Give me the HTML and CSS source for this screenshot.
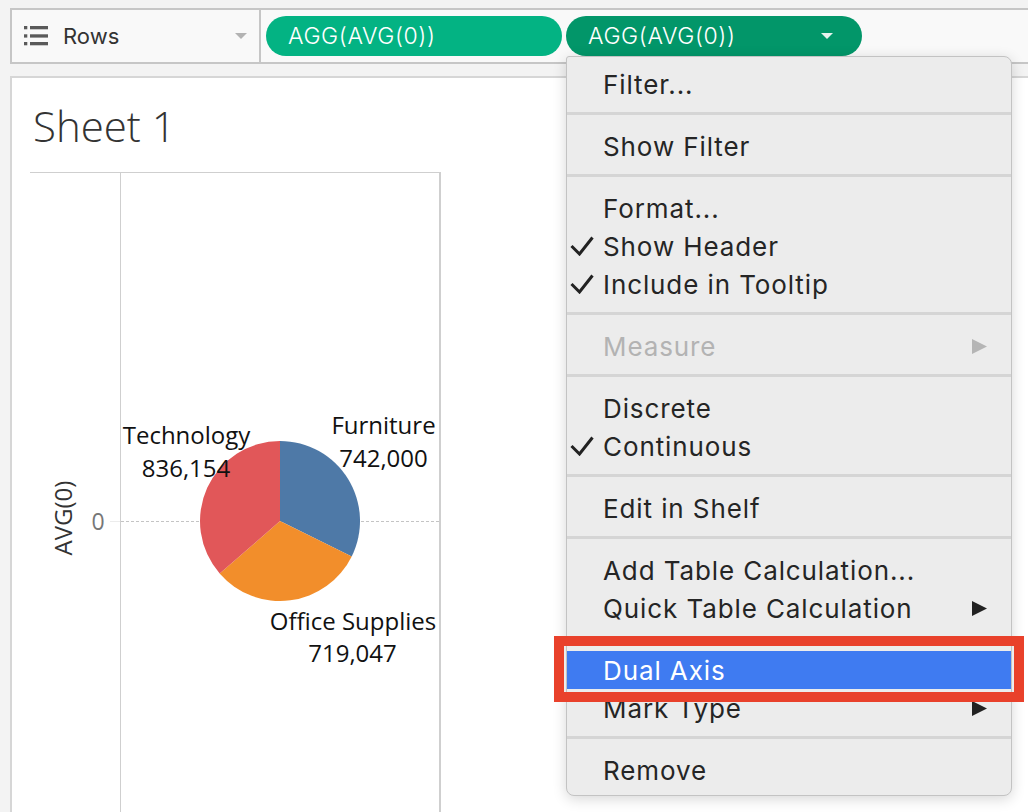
FILE: index.html
```html
<!DOCTYPE html>
<html>
<head>
<meta charset="utf-8">
<link rel="stylesheet" href="styles.css">
</head>
<body>
<div class="app">
  <div class="shelf">
    <div class="shelf-label">
      <svg class="rows-icon" width="24" height="20" viewBox="0 0 24 20">
        <rect x="0" y="0" width="3.3" height="3.3" fill="#5a5a5a"/>
        <rect x="6" y="0" width="18" height="3.3" fill="#5a5a5a"/>
        <rect x="0" y="8.3" width="3.3" height="3.3" fill="#5a5a5a"/>
        <rect x="6" y="8.3" width="18" height="3.3" fill="#5a5a5a"/>
        <rect x="0" y="16" width="3.3" height="3.3" fill="#5a5a5a"/>
        <rect x="6" y="16" width="18" height="3.3" fill="#5a5a5a"/>
      </svg>
      <span class="rows-text">Rows</span>
      <svg class="caret" width="12" height="6" viewBox="0 0 12 6"><polygon points="0,0 12,0 6,6" fill="#b3b3b3"/></svg>
    </div>
    <div class="shelf-pills">
      <div class="pill pill-a">AGG(AVG(0))</div>
      <div class="pill pill-b">
        <span>AGG(AVG(0))</span>
        <svg class="pill-caret" width="12" height="6" viewBox="0 0 12 6"><polygon points="0,0 12,0 6,6" fill="#e6f3ee"/></svg>
      </div>
    </div>
  </div>

  <div class="sheet">
    <h1 class="sheet-title">Sheet 1</h1>
    <div class="chart">
      <div class="axis">
        <svg width="90" height="639" viewBox="0 0 90 639">
          <line x1="80" y1="348.5" x2="90" y2="348.5" stroke="#ececec" stroke-width="1"/>
          <text class="axis-title" x="32" y="345" font-size="24" transform="rotate(-90 32 345)" text-anchor="middle" dominant-baseline="central">AVG(0)</text>
          <text class="tick" x="68" y="357" font-size="23" text-anchor="middle">0</text>
        </svg>
      </div>
      <div class="pane">
        <svg width="318" height="639" viewBox="0 0 318 639">
          <line x1="0" y1="348.5" x2="318" y2="348.5" stroke="#c4c4c4" stroke-width="1" stroke-dasharray="3 2"/>
          <path d="M159 348 L159 268 A80 80 0 0 1 230.73 383.42 Z" fill="#4e79a7"/>
          <path d="M159 348 L230.73 383.42 A80 80 0 0 1 98.66 400.52 Z" fill="#f28e2b"/>
          <path d="M159 348 L98.66 400.52 A80 80 0 0 1 159 268 Z" fill="#e15759"/>
          <text class="lbl" x="65.5" y="271" text-anchor="middle">Technology</text>
          <text class="lbl" x="65" y="304" text-anchor="middle">836,154</text>
          <text class="lbl" x="262.5" y="261" text-anchor="middle">Furniture</text>
          <text class="lbl" x="262.5" y="294" text-anchor="middle">742,000</text>
          <text class="lbl" x="232" y="457" text-anchor="middle">Office Supplies</text>
          <text class="lbl" x="231.5" y="489" text-anchor="middle">719,047</text>
        </svg>
      </div>
    </div>
  </div>

  <div class="menu">
    <div class="item"><span class="mark"></span><span class="label">Filter...</span></div>
    <div class="sep"></div>
    <div class="item"><span class="mark"></span><span class="label">Show Filter</span></div>
    <div class="sep"></div>
    <div class="item"><span class="mark"></span><span class="label">Format...</span></div>
    <div class="item"><span class="mark"><svg width="24" height="20" viewBox="0 0 24 20"><polyline points="1.5,10 9.5,18 22.5,1.5" fill="none" stroke="#222" stroke-width="3" stroke-linejoin="miter"/></svg></span><span class="label">Show Header</span></div>
    <div class="item"><span class="mark"><svg width="24" height="20" viewBox="0 0 24 20"><polyline points="1.5,10 9.5,18 22.5,1.5" fill="none" stroke="#222" stroke-width="3" stroke-linejoin="miter"/></svg></span><span class="label">Include in Tooltip</span></div>
    <div class="sep"></div>
    <div class="item disabled"><span class="mark"></span><span class="label">Measure</span><svg class="arrow" width="15" height="15" viewBox="0 0 15 15"><polygon points="0,0 15,7.5 0,15" fill="#b5b5b5"/></svg></div>
    <div class="sep"></div>
    <div class="item"><span class="mark"></span><span class="label">Discrete</span></div>
    <div class="item"><span class="mark"><svg width="24" height="20" viewBox="0 0 24 20"><polyline points="1.5,10 9.5,18 22.5,1.5" fill="none" stroke="#222" stroke-width="3" stroke-linejoin="miter"/></svg></span><span class="label">Continuous</span></div>
    <div class="sep"></div>
    <div class="item"><span class="mark"></span><span class="label">Edit in Shelf</span></div>
    <div class="sep"></div>
    <div class="item"><span class="mark"></span><span class="label">Add Table Calculation...</span></div>
    <div class="item"><span class="mark"></span><span class="label">Quick Table Calculation</span><svg class="arrow" width="15" height="15" viewBox="0 0 15 15"><polygon points="0,0 15,7.5 0,15" fill="#222"/></svg></div>
    <div class="sep"></div>
    <div class="item active"><span class="mark"></span><span class="label">Dual Axis</span></div>
    <div class="item"><span class="mark"></span><span class="label">Mark Type</span><svg class="arrow" width="15" height="15" viewBox="0 0 15 15"><polygon points="0,0 15,7.5 0,15" fill="#222"/></svg></div>
    <div class="sep"></div>
    <div class="item"><span class="mark"></span><span class="label">Remove</span></div>
  </div>

  <div class="callout"></div>
</div>
</body>
</html>
```

FILE: styles.css
```css
html, body {
  margin: 0;
  padding: 0;
}
body {
  background: #f3f3f3;
  width: 1028px;
  height: 812px;
  overflow: hidden;
  font-family: "Inter", "Liberation Sans", sans-serif;
}
.app {
  position: relative;
  width: 1028px;
  height: 812px;
  box-sizing: border-box;
  padding-top: 8px;
}

/* Shelf */
.shelf {
  margin: 0 0 0 10px;
  height: 56px;
  box-sizing: border-box;
  border-top: 2px solid #c6c6c6;
  border-bottom: 2px solid #c6c6c6;
  border-left: 2px solid #c6c6c6;
  display: flex;
}
.shelf-label {
  width: 249px;
  box-sizing: border-box;
  background: #f9f9f9;
  border-right: 2px solid #c6c6c6;
  display: flex;
  align-items: center;
  padding-left: 12px;
  padding-right: 12px;
}
.rows-icon {
  flex: none;
  display: block;
}
.rows-text {
  margin-left: 15px;
  font-size: 22px;
  color: #333;
}
.caret {
  margin-left: auto;
  display: block;
}
.shelf-pills {
  flex: 1;
  background: #f9f9f9;
  display: flex;
  align-items: center;
  gap: 4px;
  padding-left: 5px;
}
.pill {
  height: 40px;
  width: 296px;
  box-sizing: border-box;
  border-radius: 20px;
  color: #fff;
  font-size: 23px;
  letter-spacing: 0.6px;
  font-weight: 300;
  display: flex;
  align-items: center;
  padding-left: 22px;
}
.pill-a {
  background: #03b383;
}
.pill-b {
  background: #029669;
  justify-content: space-between;
  padding-right: 29px;
}
.pill-caret {
  display: block;
}

/* Sheet */
.sheet {
  margin: 12px 0 0 10px;
  height: 736px;
  box-sizing: border-box;
  background: #fff;
  border-top: 2px solid #d6d6d6;
  border-left: 2px solid #d6d6d6;
}
.sheet-title {
  margin: 0;
  height: 94px;
  box-sizing: border-box;
  padding: 20px 0 0 21px;
  font-family: "Open Sans", sans-serif;
  font-weight: 300;
  font-size: 42px;
  line-height: 56px;
  color: #333;
}
.chart {
  margin-left: 18px;
  width: 411px;
  height: 640px;
  box-sizing: border-box;
  border-top: 1px solid #cfcfcf;
  border-right: 2px solid #cfcfcf;
  display: flex;
}
.axis {
  width: 91px;
  box-sizing: border-box;
  border-right: 1px solid #cfcfcf;
}
.axis svg, .pane svg {
  display: block;
}
.pane {
  width: 318px;
}
.axis-title {
  font-family: "Open Sans", sans-serif;
  font-size: 24px;
  fill: #333;
}
.tick {
  font-family: "Open Sans", sans-serif;
  font-size: 23px;
  fill: #777;
}
.lbl {
  font-family: "Open Sans", sans-serif;
  font-size: 24px;
  fill: #111;
}

/* Menu */
.menu {
  position: absolute;
  left: 566px;
  top: 56px;
  width: 446px;
  box-sizing: border-box;
  border: 1px solid #c3c3c3;
  border-radius: 3px 8px 8px 8px;
  background: #ececec;
  padding: 8px 0 6px;
  box-shadow: 0 3px 14px rgba(0, 0, 0, 0.16);
}
.item {
  height: 38px;
  display: flex;
  align-items: center;
  padding-left: 3px;
  padding-right: 24px;
  font-size: 26px;
  letter-spacing: 0.9px;
  color: #252525;
}
.mark {
  width: 33px;
  flex: none;
  display: flex;
  align-items: center;
}
.mark svg {
  display: block;
}
.label {
  flex: 1;
  white-space: nowrap;
}
.arrow {
  display: block;
  flex: none;
}
.item.disabled {
  color: #b3b3b3;
}
.item.active {
  background: #3f7bf1;
  color: #fff;
}
.sep {
  height: 3px;
  margin: 9px 0 12px;
  background: #d5d5d5;
}

/* Annotation box */
.callout {
  position: absolute;
  left: 554px;
  top: 636px;
  width: 470px;
  height: 66px;
  box-sizing: border-box;
  border: 10px solid #e9412b;
}
```
